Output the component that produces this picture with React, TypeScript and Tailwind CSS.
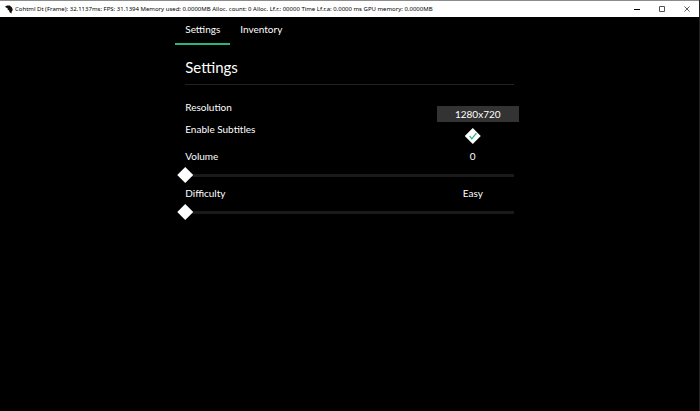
import { useState } from "react";

const tabs = ["Settings", "Inventory"];
const levels = ["Easy", "Medium", "Hard"];

function TitleBar() {
  return (
    <header className="flex h-[17px] items-center border-t border-[#8c8c8c] bg-white font-['Noto_Sans',sans-serif] text-black">
      <svg viewBox="0 0 8 9" className="ml-[5px] h-[9px] w-2" aria-hidden="true">
        <path d="M0 1.4 2.2.4 4.8.6 7 2.4 7.8 5 6.8 6.6 6.4 8.6 4.6 7.2 4 5.4 2.4 4.2 2.6 3 1.2 2.8Z" fill="#111" />
      </svg>
      <h1 className="ml-[2px] flex-1 overflow-hidden whitespace-nowrap text-[6px] leading-4">
        Cohtml Dt (Frame): 32.1137ms; FPS: 31.1394 Memory used: 0.0000MB Alloc. count: 0 Alloc. Lf.r.: 00000 Time Lf.r.a: 0.0000 ms GPU memory: 0.0000MB
      </h1>
      <div className="flex">
        <button type="button" aria-label="Minimize" className="flex h-4 w-[25px] items-center justify-center">
          <svg viewBox="0 0 6 6" className="size-[6px]"><path d="M0 3.5h6" stroke="#000" /></svg>
        </button>
        <button type="button" aria-label="Maximize" className="flex h-4 w-[25px] items-center justify-center">
          <svg viewBox="0 0 6 6" className="size-[6px]"><path d="M.5.5h5v5h-5z" fill="none" stroke="#555" /></svg>
        </button>
        <button type="button" aria-label="Close" className="flex h-4 w-[25px] items-center justify-center">
          <svg viewBox="0 0 6 6" className="size-[6px]"><path d="M.4.4l5.2 5.2M5.6.4.4 5.6" stroke="#333" strokeWidth=".8" /></svg>
        </button>
      </div>
    </header>
  );
}

type SliderProps = { id: string; label: string; text: string; max: number; value: number; onChange: (value: number) => void };

function SliderRow({ id, label, text, max, value, onChange }: SliderProps) {
  return (
    <div className="h-[37px]">
      <div className="grid grid-cols-[1fr_82px] leading-4">
        <label htmlFor={id}>{label}</label>
        <output htmlFor={id} className="text-center">{text}</output>
      </div>
      <input
        id={id}
        type="range"
        min={0}
        max={max}
        value={value}
        onChange={(e) => onChange(Number(e.target.value))}
        className="-mx-2 mt-[3px] block h-4 w-[calc(100%+16px)] appearance-none bg-[linear-gradient(#1a1a1a,#1a1a1a)] bg-[length:calc(100%-16px)_3px] bg-center bg-no-repeat [&::-webkit-slider-thumb]:size-4 [&::-webkit-slider-thumb]:appearance-none [&::-webkit-slider-thumb]:bg-white [&::-webkit-slider-thumb]:[clip-path:polygon(50%_0,100%_50%,50%_100%,0_50%)]"
      />
    </div>
  );
}

export default function App() {
  const [tab, setTab] = useState("Settings");
  const [subtitles, setSubtitles] = useState(true);
  const [volume, setVolume] = useState(0);
  const [level, setLevel] = useState(0);

  return (
    <div className="flex min-h-screen flex-col border-r border-[#222] bg-black font-[Lato,sans-serif] text-[10px] text-white">
      <TitleBar />
      <main className="mx-auto w-[47%]">
        <nav className="-ml-[10px] flex">
          {tabs.map((name) => (
            <button
              key={name}
              type="button"
              onClick={() => setTab(name)}
              className={`h-7 border-b-2 px-[10px] pb-[2px] leading-4 ${tab === name ? "border-[#2bb47c]" : "border-transparent"}`}
            >
              {name}
            </button>
          ))}
        </nav>
        <h2 className="mb-[14px] mt-2 border-b border-[#222] pb-[3px] text-[15px] leading-7">Settings</h2>
        <div className="grid h-[22px] grid-cols-[1fr_82px] leading-4">
          <label htmlFor="resolution">Resolution</label>
          <select
            id="resolution"
            className="-mr-[5px] ml-[5px] mt-[7px] h-4 appearance-none bg-[#333] text-center leading-4"
          >
            <option>1280x720</option>
            <option>1920x1080</option>
          </select>
        </div>
        <div className="grid h-[27px] grid-cols-[1fr_82px] leading-4">
          <label htmlFor="subtitles">Enable Subtitles</label>
          <div className="mt-[7px] grid size-4 place-items-center justify-self-center">
            <input
              id="subtitles"
              type="checkbox"
              checked={subtitles}
              onChange={(e) => setSubtitles(e.target.checked)}
              className="col-start-1 row-start-1 size-4 appearance-none bg-white [clip-path:polygon(50%_0,100%_50%,50%_100%,0_50%)]"
            />
            {subtitles && (
              <svg viewBox="0 0 8 8" className="pointer-events-none z-10 col-start-1 row-start-1 size-2" aria-hidden="true">
                <path d="M.6 4.2 2.8 6.8 7.4 1.2" fill="none" stroke="#2bb47c" strokeWidth="1.3" />
              </svg>
            )}
          </div>
        </div>
        <SliderRow id="volume" label="Volume" text={String(volume)} max={100} value={volume} onChange={setVolume} />
        <SliderRow id="difficulty" label="Difficulty" text={levels[level]} max={2} value={level} onChange={setLevel} />
      </main>
    </div>
  );
}
